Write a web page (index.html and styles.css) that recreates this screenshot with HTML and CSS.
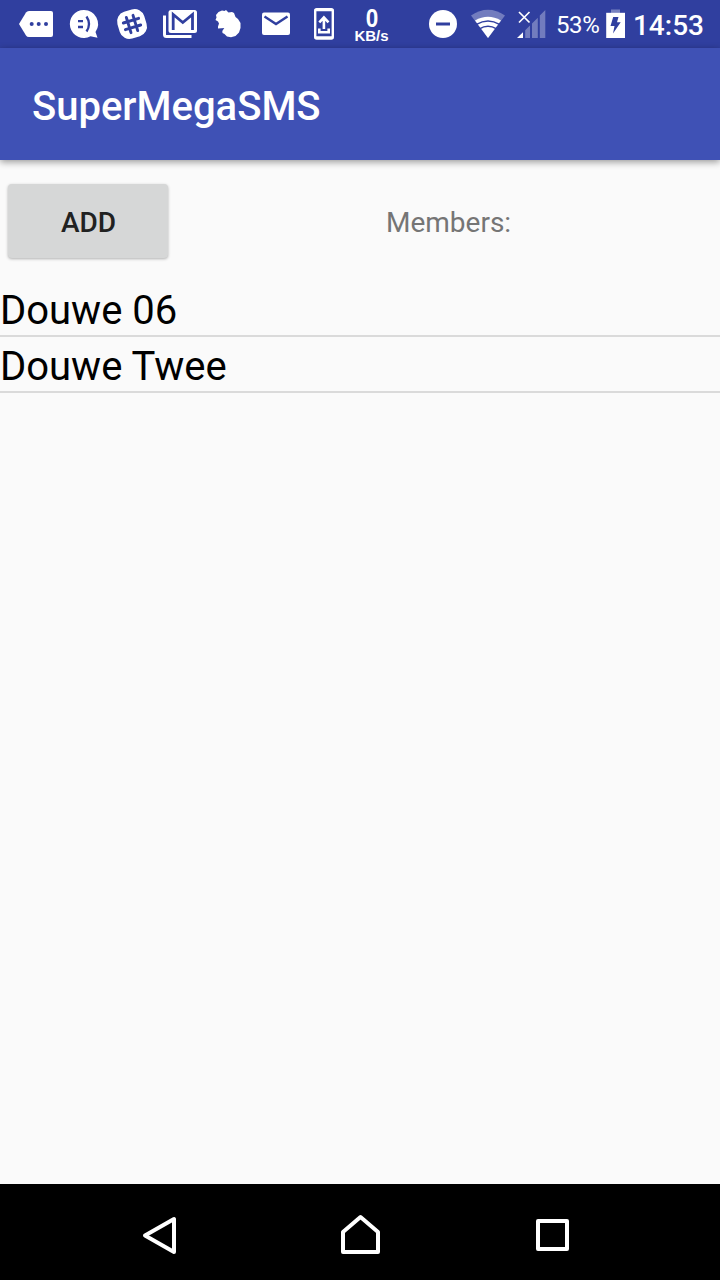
FILE: index.html
```html
<!DOCTYPE html>
<html lang="en">
<head>
<meta charset="utf-8">
<title>SuperMegaSMS</title>
<link rel="stylesheet" href="styles.css">
</head>
<body>
<div class="screen">
  <header class="status-bar">
    <div class="notifications">
      <svg class="slot" viewBox="12 0 48 48"><path fill="#fff" d="M19 24L26 12.5Q27 11 29 11H51Q53 11 53 13V35Q53 37 51 37H29Q27 37 26 35.5Z"/><g fill="#303f9f"><circle cx="31.7" cy="24" r="2"/><circle cx="38.7" cy="24" r="2"/><circle cx="46" cy="24" r="2"/></g></svg>
      <svg class="slot" viewBox="60 0 48 48"><path fill="#fff" d="M84 10A14 14 0 0 1 95.5 32L97.5 37.8L90.5 36.3A14 14 0 1 1 84 10Z"/><path d="M78 21.2H83M78 27H83M86.5 16.5Q91.5 24 86.5 31.5" fill="none" stroke="#303f9f" stroke-width="2.3"/></svg>
      <svg class="slot" viewBox="108 0 48 48"><g transform="rotate(-17 132 24)"><rect x="118" y="10" width="28" height="28" rx="10" fill="#fff"/><path d="M128.5 16V32M135.5 16V32M124 20.5H140M124 27.5H140" stroke="#303f9f" stroke-width="2.9" stroke-linecap="round"/></g></svg>
      <svg class="slot" viewBox="156 0 48 48"><path d="M164.5 15.5V34.5Q164.5 36.5 166.5 36.5H191.5" fill="none" stroke="#fff" stroke-width="3"/><rect x="168.5" y="10" width="28.5" height="23" rx="2.5" fill="#fff"/><path d="M173.2 30V14.5L182.8 22.5L192.5 14.5V30" fill="none" stroke="#303f9f" stroke-width="2.8"/></svg>
      <svg class="slot" viewBox="204 0 48 48"><path fill="#fff" d="M218.5 12L222 10.5L224.5 11L226 10L228.5 12.5L232 12L234 13L235.5 17L238 19L240.5 23L240.5 28L239 32.5L235.5 36L231 37.3L227 36.5L224.5 34L222.5 33L222.3 31L224.3 28L221.5 28.2L218 28.5L218 26.5L219 23.5L218 21.5L215.5 20L216.5 17.5L216 15Z"/></svg>
      <svg class="slot" viewBox="252 0 48 48"><rect x="262" y="12.5" width="28" height="22.5" rx="2" fill="#fff"/><path d="M264.5 16.5L276 24L287.5 16.5" fill="none" stroke="#303f9f" stroke-width="2.4"/></svg>
      <svg class="slot" viewBox="300 0 48 48"><rect x="315.2" y="9.3" width="17.6" height="29.2" rx="1.5" fill="none" stroke="#fff" stroke-width="2.4"/><path d="M314.8 9H333.2V11.2H314.8ZM314.8 36.3H333.2V38.5H314.8Z" fill="#fff"/><path d="M319.3 28.5V32.3H328.7V28.5M323.9 29V18.5M319.3 22.3L323.9 17.5L328.5 22.3" fill="none" stroke="#fff" stroke-width="2.6"/></svg>
      <div class="slot speed"><span class="speed-value">0</span><span class="speed-unit">KB/s</span></div>
    </div>
    <div class="system">
      <svg width="128" height="48" viewBox="424 0 128 48">
        <circle cx="443" cy="24" r="14" fill="#fff"/><path d="M436 24H450" stroke="#303f9f" stroke-width="3"/>
        <path d="M471 15.6Q488 4 505 15.6L488 38Z" fill="#fff" fill-opacity=".32"/>
        <path d="M475 20.5Q488 13 501 20.5L488 38Z" fill="#fff"/>
        <path d="M476.5 24.3Q488 17.5 499.5 24.3M479.5 28.8Q488 23.7 496.5 28.8" fill="none" stroke="#303f9f" stroke-width="1.5"/>
        <path d="M525.2 30.2L530 25.5V38H525.2ZM532 23.4L537.8 17.7V38H532ZM539.8 15.6L545.3 10V38H539.8Z" fill="#fff" fill-opacity=".32"/>
        <path d="M517 38L523 32.3V38Z" fill="#fff"/>
        <path d="M519 12L529.5 22.5M529.5 12L519 22.5" stroke="#fff" stroke-width="1.7"/>
      </svg>
      <span class="percent">53%</span>
      <svg class="battery" width="20" height="48" viewBox="606 0 20 48"><path d="M611 9.5H620V13H611Z" fill="#fff" fill-opacity=".35"/><path d="M606.2 12.8H625V38H606.2Z" fill="#fff"/><path d="M613.2 17H618.5L617 22.2H620.7L613 33.5L614.5 26H610.5Z" fill="#303f9f"/></svg>
      <span class="clock">14:53</span>
    </div>
  </header>
  <div class="app-bar"><h1 class="title">SuperMegaSMS</h1></div>
  <main class="content">
    <div class="controls">
      <button class="add">ADD</button>
      <span class="members">Members:</span>
    </div>
    <ul class="list">
      <li class="item">Douwe 06</li>
      <li class="item">Douwe Twee</li>
    </ul>
  </main>
  <nav class="nav-bar">
    <svg width="720" height="96" viewBox="0 1184 720 96" fill="none" stroke="#fff" stroke-width="4" stroke-linejoin="round"><path d="M145 1235.5L174 1219V1252Z"/><path d="M343 1252V1232L360.5 1217L378 1232V1252Z"/><rect x="538" y="1221" width="29" height="28"/></svg>
  </nav>
</div>
</body>
</html>
```
FILE: styles.css
```css
* { box-sizing: border-box; }
body { margin: 0; font-family: Roboto, "Liberation Sans", sans-serif; }
svg { display: block; flex: none; }
.screen { display: flex; flex-direction: column; width: 720px; height: 1280px; background: #fafafa; overflow: hidden; }
.status-bar { display: flex; justify-content: space-between; height: 48px; padding: 0 16px 0 12px; background: #303f9f; color: #fff; }
.notifications, .system { display: flex; }
.slot { width: 48px; height: 48px; }
.speed { display: flex; flex-direction: column; align-items: center; padding: 8px 1px 0 0; font-weight: bold; font-family: "Liberation Sans", sans-serif; }
.speed-value { font-size: 25px; line-height: 20px; transform: scaleX(.9); }
.speed-unit { font-size: 15px; line-height: 15px; }
.system { align-items: center; width: 280px; }
.percent { width: 54px; padding: 2px 0 0 4px; font-size: 24px; letter-spacing: -.4px; white-space: nowrap; }
.battery { margin-right: 7px; }
.clock { padding-top: 2px; font-size: 28px; font-weight: 500; white-space: nowrap; }
.app-bar { display: flex; flex: none; align-items: center; height: 112px; padding: 4px 32px 0; background: #3f51b5; color: #fff; box-shadow: 0 2px 7px rgba(0,0,0,.4); }
.title { margin: 0; font-size: 40px; font-weight: 500; }
.content { flex: 1; padding-top: 24px; }
.controls { display: flex; align-items: center; height: 74px; padding-left: 8px; }
.add { width: 160px; height: 74px; padding: 2px 0 0 1px; border: 0; border-radius: 4px; background: #d6d7d7; color: #212121; font: 500 28px Roboto, sans-serif; box-shadow: 0 1px 3px rgba(0,0,0,.3); }
.members { padding: 2px 0 0 218px; font-size: 28px; color: #757575; }
.list { margin: 23px 0 0; padding: 0; list-style: none; }
.item { height: 56px; padding-top: 3px; border-bottom: 2px solid #dadada; font-size: 40px; line-height: 54px; color: #000; }
.nav-bar { flex: none; height: 96px; background: #000; }
```
